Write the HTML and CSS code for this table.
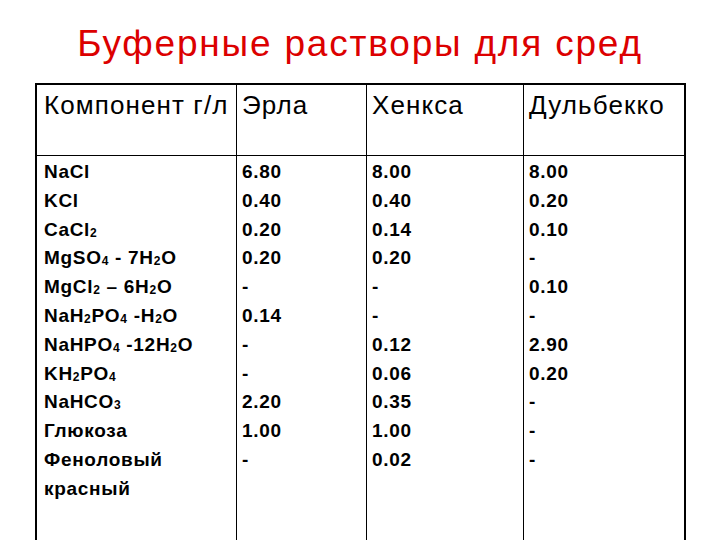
FILE: index.html
```html
<!DOCTYPE html>
<html lang="ru">
<head>
<meta charset="utf-8">
<title>Буферные растворы для сред</title>
<link rel="stylesheet" href="styles.css">
</head>
<body>
<div class="slide">
  <h1 class="title">Буферные растворы для сред</h1>
  <div class="sheet">
    <div class="head first">Компонент г/л</div>
    <div class="head">Эрла</div>
    <div class="head">Хенкса</div>
    <div class="head">Дульбекко</div>

    <div class="cell first">
      <div class="ln">NaCl</div>
      <div class="ln">KCl</div>
      <div class="ln">CaCl<sub>2</sub></div>
      <div class="ln">MgSO<sub>4</sub> - 7H<sub>2</sub>O</div>
      <div class="ln">MgCl<sub>2</sub> – 6H<sub>2</sub>O</div>
      <div class="ln">NaH<sub>2</sub>PO<sub>4</sub> -H<sub>2</sub>O</div>
      <div class="ln">NaHPO<sub>4</sub> -12H<sub>2</sub>O</div>
      <div class="ln">KH<sub>2</sub>PO<sub>4</sub></div>
      <div class="ln">NaHCO<sub>3</sub></div>
      <div class="ln">Глюкоза</div>
      <div class="ln">Феноловый<br>красный</div>
    </div>
    <div class="cell">
      <div class="ln">6.80</div>
      <div class="ln">0.40</div>
      <div class="ln">0.20</div>
      <div class="ln">0.20</div>
      <div class="ln">-</div>
      <div class="ln">0.14</div>
      <div class="ln">-</div>
      <div class="ln">-</div>
      <div class="ln">2.20</div>
      <div class="ln">1.00</div>
      <div class="ln">-</div>
    </div>
    <div class="cell">
      <div class="ln">8.00</div>
      <div class="ln">0.40</div>
      <div class="ln">0.14</div>
      <div class="ln">0.20</div>
      <div class="ln">-</div>
      <div class="ln">-</div>
      <div class="ln">0.12</div>
      <div class="ln">0.06</div>
      <div class="ln">0.35</div>
      <div class="ln">1.00</div>
      <div class="ln">0.02</div>
    </div>
    <div class="cell">
      <div class="ln">8.00</div>
      <div class="ln">0.20</div>
      <div class="ln">0.10</div>
      <div class="ln">-</div>
      <div class="ln">0.10</div>
      <div class="ln">-</div>
      <div class="ln">2.90</div>
      <div class="ln">0.20</div>
      <div class="ln">-</div>
      <div class="ln">-</div>
      <div class="ln">-</div>
    </div>
  </div>
</div>
</body>
</html>
```
FILE: styles.css
```css
html, body {
  margin: 0;
  padding: 0;
  background: #ffffff;
}
body {
  font-family: "Liberation Sans", Arial, sans-serif;
  color: #000;
  width: 720px;
  height: 540px;
  overflow: hidden;
}
.slide {
  padding-top: 23px;
}
.title {
  margin: 0;
  font-weight: normal;
  font-size: 37px;
  line-height: 42px;
  letter-spacing: 1.8px;
  color: #dc0000;
  text-align: center;
}
.sheet {
  margin: 18px 0 0 35px;
  width: 651px;
  box-sizing: border-box;
  border: 2px solid #000;
  border-bottom: none;
  display: grid;
  grid-template-columns: 199px 130px 157px 1fr;
}
.head {
  box-sizing: border-box;
  border-left: 1px solid #000;
  border-bottom: 1px solid #000;
  height: 71px;
  padding: 5px 0 0 5px;
  font-size: 26px;
  line-height: 30px;
  letter-spacing: 1.1px;
}
.cell {
  border-left: 1px solid #000;
  padding: 2px 0 0 5px;
  height: 400px;
  font-size: 19px;
  font-weight: bold;
  line-height: 28.8px;
  letter-spacing: 0.7px;
}
.head.first, .cell.first {
  border-left: none;
  padding-left: 7px;
}
.ln {
  white-space: nowrap;
}
sub {
  font-size: 12px;
  vertical-align: -1px;
  line-height: 0;
}
```
